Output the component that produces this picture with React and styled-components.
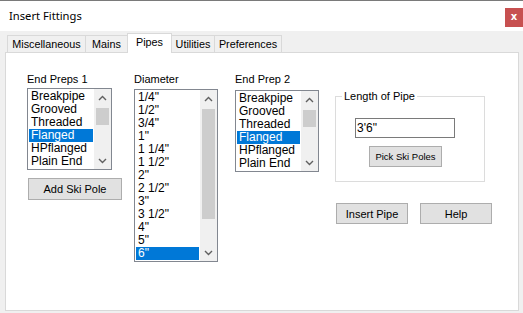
import React from "react";
import styled, { createGlobalStyle } from "styled-components";

const Global = createGlobalStyle`
  html, body { margin: 0; padding: 0; background: #f0f0f0; }
  body { font-family: "Liberation Sans", Arial, sans-serif; color: #000; }
  * { box-sizing: border-box; }
`;

const Window = styled.div`
  width: 523px;
  height: 313px;
  display: flex;
  flex-direction: column;
  background: #f0f0f0;
  overflow: hidden;
`;

const TitleBar = styled.div`
  height: 31px;
  flex: none;
  background: #fff;
  border-top: 1px solid #7a7a7a;
  display: flex;
  align-items: flex-start;
  justify-content: space-between;
`;

const Title = styled.div`
  font-family: "Noto Sans", "Open Sans", sans-serif;
  font-size: 11.2px;
  line-height: 16px;
  padding: 7px 0 0 9px;
  color: #000;
`;

const CloseButton = styled.div`
  width: 18px;
  height: 19px;
  margin-top: 7px;
  background: #c75050;
  color: #fff;
  font-family: "DejaVu Sans", sans-serif;
  font-weight: bold;
  font-size: 10px;
  line-height: 18px;
  text-align: center;
`;

const Body = styled.div`
  flex: 1;
  padding: 2px 4px 2px 5px;
  display: flex;
  flex-direction: column;
`;

const TabStrip = styled.div`
  height: 19px;
  flex: none;
  display: flex;
  align-items: flex-end;
  padding-left: 2px;
  position: relative;
  z-index: 1;
`;

const Tab = styled.div`
  width: ${(p) => p.$w}px;
  height: ${(p) => (p.$active ? 20 : 17)}px;
  margin-bottom: ${(p) => (p.$active ? -1 : 0)}px;
  margin-right: -1px;
  border: 1px solid #d9d9d9;
  border-bottom: none;
  background: ${(p) => (p.$active ? "#fff" : "#f0f0f0")};
  font-size: 10.8px;
  line-height: 16px;
  text-align: center;
  color: #000;
  position: relative;
  z-index: ${(p) => (p.$active ? 2 : 1)};
`;

const Panel = styled.div`
  flex: 1;
  background: #fff;
  border: 1px solid #d9d9d9;
  display: flex;
  align-items: flex-start;
  padding: 20px 0 0 21px;
`;

const Column = styled.div`
  width: ${(p) => p.$w}px;
  margin-left: ${(p) => p.$ml || 0}px;
  display: flex;
  flex-direction: column;
  flex: none;
`;

const Label = styled.div`
  font-size: 11px;
  line-height: 13px;
  height: 13px;
  margin-bottom: ${(p) => p.$mb}px;
  white-space: nowrap;
`;

const Spacer = styled.div`
  height: ${(p) => p.$h}px;
  flex: none;
`;

const ListBox = styled.div`
  width: ${(p) => p.$w}px;
  border: 1px solid #828790;
  display: flex;
  background: #fff;
`;

const Items = styled.div`
  flex: 1;
  padding: 1px;
  display: flex;
  flex-direction: column;
`;

const Item = styled.div`
  height: 13px;
  line-height: 13px;
  font-size: 12px;
  padding-left: 2px;
  white-space: nowrap;
  background: ${(p) => (p.$sel ? "#0078d7" : "transparent")};
  color: ${(p) => (p.$sel ? "#fff" : "#000")};
`;

const ScrollBar = styled.div`
  width: 17px;
  flex: none;
  background: #f0f0f0;
  display: flex;
  flex-direction: column;
`;

const Arrow = styled.div`
  height: 17px;
  flex: none;
  display: flex;
  align-items: center;
  justify-content: center;
`;

const Track = styled.div`
  flex: 1;
  padding: ${(p) => p.$top}px 2px 0 2px;
`;

const Thumb = styled.div`
  height: ${(p) => p.$h}px;
  background: #cdcdcd;
`;

const Button = styled.div`
  width: ${(p) => p.$w}px;
  height: ${(p) => p.$h}px;
  margin-left: ${(p) => p.$ml || 0}px;
  margin-top: ${(p) => p.$mt || 0}px;
  background: #e1e1e1;
  border: 1px solid #adadad;
  font-size: ${(p) => p.$fs || 11}px;
  display: flex;
  align-items: center;
  justify-content: center;
  white-space: nowrap;
  flex: none;
`;

const GroupBox = styled.div`
  width: 150px;
  height: 86px;
  border: 1px solid #dcdcdc;
  position: relative;
  display: flex;
  flex-direction: column;
  padding: 21px 0 0 19px;
`;

const Legend = styled.span`
  position: absolute;
  top: -7px;
  left: 6px;
  padding: 0 2px;
  background: #fff;
  font-size: 11px;
  line-height: 13px;
`;

const TextInput = styled.div`
  width: 100px;
  height: 20px;
  border: 1px solid #7a7a7a;
  font-size: 12px;
  line-height: 18px;
  padding-left: 1px;
`;

const ButtonRow = styled.div`
  display: flex;
  margin-top: 21px;
  margin-left: 1px;
  gap: 12px;
`;

const Chevron = ({ up }) => (
  <svg width="9" height="6" viewBox="0 0 9 6">
    <path
      d={up ? "M1 5 L4.5 1.5 L8 5" : "M1 1 L4.5 4.5 L8 1"}
      fill="none"
      stroke="#606060"
      strokeWidth="1.4"
    />
  </svg>
);

const List = ({ w, items, sel, thumbTop, thumbH }) => (
  <ListBox $w={w}>
    <Items>
      {items.map((it) => (
        <Item key={it} $sel={it === sel}>
          {it}
        </Item>
      ))}
    </Items>
    <ScrollBar>
      <Arrow>
        <Chevron up />
      </Arrow>
      <Track $top={thumbTop}>
        <Thumb $h={thumbH} />
      </Track>
      <Arrow>
        <Chevron />
      </Arrow>
    </ScrollBar>
  </ListBox>
);

const preps = ["Breakpipe", "Grooved", "Threaded", "Flanged", "HPflanged", "Plain End"];
const diameters = [
  "1/4\"", "1/2\"", "3/4\"", "1\"", "1 1/4\"", "1 1/2\"", "2\"", "2 1/2\"",
  "3\"", "3 1/2\"", "4\"", "5\"", "6\"",
];

const tabs = [
  ["Miscellaneous", 79],
  ["Mains", 43],
  ["Pipes", 45],
  ["Utilities", 44],
  ["Preferences", 68],
];

export default function App() {
  return (
    <>
      <Global />
      <Window>
        <TitleBar>
          <Title>Insert Fittings</Title>
          <CloseButton>x</CloseButton>
        </TitleBar>
        <Body>
          <TabStrip>
            {tabs.map(([t, w]) => (
              <Tab key={t} $w={w} $active={t === "Pipes"}>
                {t}
              </Tab>
            ))}
          </TabStrip>
          <Panel>
            <Column $w={95}>
              <Label $mb={2}>End Preps 1</Label>
              <List w={85} items={preps} sel="Flanged" thumbTop={2} thumbH={17} />
              <Button $w={94} $h={22} $ml={1} $mt={8}>
                Add Ski Pole
              </Button>
            </Column>
            <Column $w={84} $ml={12}>
              <Label $mb={3}>Diameter</Label>
              <List w={84} items={diameters} sel={'6"'} thumbTop={2} thumbH={110} />
            </Column>
            <Column $w={84} $ml={17}>
              <Label $mb={4}>End Prep 2</Label>
              <List w={84} items={preps} sel="Flanged" thumbTop={2} thumbH={17} />
            </Column>
            <Column $w={157} $ml={16}>
              <Spacer $h={23} />
              <GroupBox>
                <Legend>Length of Pipe</Legend>
                <TextInput>3'6"</TextInput>
                <Button $w={73} $h={21} $ml={14} $mt={8} $fs={9.5}>
                  Pick Ski Poles
                </Button>
              </GroupBox>
              <ButtonRow>
                <Button $w={72} $h={21}>
                  Insert Pipe
                </Button>
                <Button $w={72} $h={21}>
                  Help
                </Button>
              </ButtonRow>
            </Column>
          </Panel>
        </Body>
      </Window>
    </>
  );
}
